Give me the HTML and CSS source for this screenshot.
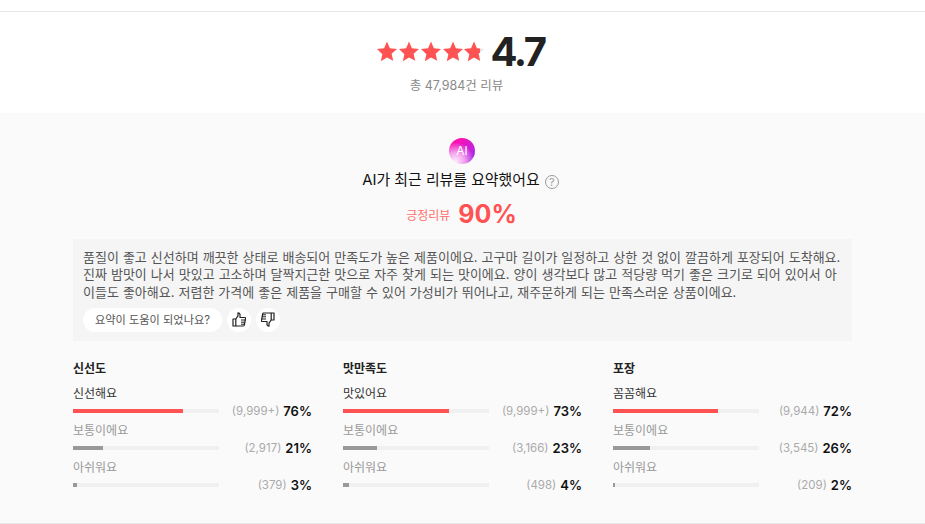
FILE: index.html
```html
<!DOCTYPE html>
<html lang="ko">
<head>
    <meta charset="UTF-8">
    <meta name="viewport" content="width=device-width, initial-scale=1.0">
    <title>리뷰 요약</title>
    <link rel="stylesheet" href="styles.css">
</head>
<body>
    <section class="rating">
        <div class="rating-top">
            <svg class="stars" width="107" height="22" viewBox="0 0 107 22" aria-hidden="true">
                <defs>
                    <path id="star" d="M10 .6l2.9 6.700 7.100.7-5.400 4.700 1.600 7.100L10 16.600l-6.200 3.700 1.600-7.100L0 8l7.100-.7z"/>
                    <clipPath id="part"><rect x="0" y="0" width="16" height="22"/></clipPath>
                </defs>
                <use href="#star" x="0" fill="#ff5252"/>
                <use href="#star" x="22" fill="#ff5252"/>
                <use href="#star" x="44" fill="#ff5252"/>
                <use href="#star" x="66" fill="#ff5252"/>
                <use href="#star" x="87" fill="#e4e4e4"/>
                <use href="#star" x="87" fill="#ff5252" clip-path="url(#part)"/>
            </svg>
            <strong class="score">4.7</strong>
        </div>
        <p class="total">총 47,984건 리뷰</p>
    </section>

    <section class="panel">
        <div class="ai-badge">AI</div>
        <h2 class="ai-title">AI가 최근 리뷰를 요약했어요 <span class="help">?</span></h2>
        <div class="positive">
            <span class="positive-label">긍정리뷰</span>
            <strong class="positive-value">90%</strong>
        </div>

        <div class="summary">
            <p>품질이 좋고 신선하며 깨끗한 상태로 배송되어 만족도가 높은 제품이에요. 고구마 길이가 일정하고 상한 것 없이 깔끔하게 포장되어 도착해요. 진짜 밤맛이 나서 맛있고 고소하며 달짝지근한 맛으로 자주 찾게 되는 맛이에요. 양이 생각보다 많고 적당량 먹기 좋은 크기로 되어 있어서 아이들도 좋아해요. 저렴한 가격에 좋은 제품을 구매할 수 있어 가성비가 뛰어나고, 재주문하게 되는 만족스러운 상품이에요.</p>
            <div class="feedback">
                <span class="feedback-label">요약이 도움이 되었나요?</span>
                <button class="thumb" aria-label="도움이 됐어요">
                    <svg width="14" height="15" viewBox="0 0 14 15" fill="none" stroke="#222" stroke-width="1.2" stroke-linejoin="round"><path d="M1 7h2.800v7H1z"/><path d="M3.800 7L6 3.800V.8c1.200 0 2 .8 2 2V5.500h4.800c.7 0 .9.5.7 1.100L12.400 13c-.1.600-.5 1-1.100 1H3.800"/><path d="M9 8h4.500M9 10.200h4M9 12.200h3.500" stroke-width="1"/></svg>
                </button>
                <button class="thumb" aria-label="도움이 안 됐어요">
                    <svg width="14" height="15" viewBox="0 0 14 15" fill="none" stroke="#222" stroke-width="1.2" stroke-linejoin="round"><path d="M13 8h-2.800V1H13z"/><path d="M10.200 8L8 11.200v3c-1.200 0-2-.8-2-2V9.500H1.200c-.7 0-.9-.5-.7-1.100L1.600 2c.1-.6.5-1 1.100-1h7.500"/><path d="M5 7H.5M5 4.800H1M5 2.800H1.500" stroke-width="1"/></svg>
                </button>
            </div>
        </div>

        <div class="stats">
            <div class="stat">
                <h3>신선도</h3>
                <div class="row active">
                    <div class="row-label">신선해요</div>
                    <div class="row-line"><div class="track"><div class="fill" style="width:75.5%"></div></div><span class="count">(9,999+)</span><b>76%</b></div>
                </div>
                <div class="row">
                    <div class="row-label">보통이에요</div>
                    <div class="row-line"><div class="track"><div class="fill" style="width:20.500%"></div></div><span class="count">(2,917)</span><b>21%</b></div>
                </div>
                <div class="row">
                    <div class="row-label">아쉬워요</div>
                    <div class="row-line"><div class="track"><div class="fill" style="width:3%"></div></div><span class="count">(379)</span><b>3%</b></div>
                </div>
            </div>
            <div class="stat">
                <h3>맛만족도</h3>
                <div class="row active">
                    <div class="row-label">맛있어요</div>
                    <div class="row-line"><div class="track"><div class="fill" style="width:72.500%"></div></div><span class="count">(9,999+)</span><b>73%</b></div>
                </div>
                <div class="row">
                    <div class="row-label">보통이에요</div>
                    <div class="row-line"><div class="track"><div class="fill" style="width:23%"></div></div><span class="count">(3,166)</span><b>23%</b></div>
                </div>
                <div class="row">
                    <div class="row-label">아쉬워요</div>
                    <div class="row-line"><div class="track"><div class="fill" style="width:4%"></div></div><span class="count">(498)</span><b>4%</b></div>
                </div>
            </div>
            <div class="stat">
                <h3>포장</h3>
                <div class="row active">
                    <div class="row-label">꼼꼼해요</div>
                    <div class="row-line"><div class="track"><div class="fill" style="width:72%"></div></div><span class="count">(9,944)</span><b>72%</b></div>
                </div>
                <div class="row">
                    <div class="row-label">보통이에요</div>
                    <div class="row-line"><div class="track"><div class="fill" style="width:25.500%"></div></div><span class="count">(3,545)</span><b>26%</b></div>
                </div>
                <div class="row">
                    <div class="row-label">아쉬워요</div>
                    <div class="row-line"><div class="track"><div class="fill" style="width:1.500%"></div></div><span class="count">(209)</span><b>2%</b></div>
                </div>
            </div>
        </div>
    </section>
</body>
</html>
```

FILE: styles.css
```css
body {
    font-family: Inter, "Noto Sans CJK KR", sans-serif;
    margin: 0;
    padding: 11px 0 0;
    background-color: #fff;
    color: #111;
    overflow: hidden;
}

.rating {
    border-top: 1px solid #e6e6e6;
    height: 102px;
    box-sizing: border-box;
    padding-top: 18px;
    text-align: center;
}

.rating-top {
    display: flex;
    justify-content: center;
    align-items: center;
    gap: 7px;
    height: 44px;
    margin-right: 4px;
}

.stars {
    margin-top: -1px;
}

.score {
    font-size: 40px;
    line-height: 44px;
    font-weight: 700;
    letter-spacing: -2.5px;
    color: #222;
}

.total {
    margin: 3px 12px 0 0;
    font-size: 12.500px;
    line-height: 18px;
    color: #8a8a8a;
}

.panel {
    background-color: #fafafa;
    border-bottom: 1px solid #e6e6e6;
    height: 411px;
    box-sizing: border-box;
    padding: 25px 73px 0;
    display: flex;
    flex-direction: column;
    align-items: center;
}

.ai-badge {
    width: 26px;
    height: 26px;
    margin-right: 1px;
    border-radius: 50%;
    background: radial-gradient(circle at 25% 90%, #fbeefc 0, #f3a0ee 30%, transparent 62%), linear-gradient(135deg, #ff10b0 20%, #a828f0 85%);
    color: #fff;
    font-size: 12px;
    line-height: 26px;
    text-align: center;
}

.ai-title {
    margin: 4px 4px 0 0;
    font-size: 14.900px;
    line-height: 24px;
    font-weight: 400;
    color: #111;
}

.help {
    display: inline-block;
    width: 12px;
    height: 12px;
    margin-left: 1px;
    border: 1px solid #999;
    border-radius: 50%;
    color: #999;
    font-size: 11px;
    line-height: 12px;
    text-align: center;
    vertical-align: -1px;
}

.positive {
    display: flex;
    align-items: center;
    gap: 8px;
    margin-top: 5px;
    margin-right: 2px;
    height: 34px;
}

.positive-label {
    font-size: 12px;
    color: #ff7070;
}

.positive-value {
    font-size: 25px;
    font-weight: 700;
    color: #ff5252;
}

.summary {
    align-self: stretch;
    margin-top: 8px;
    background-color: #f5f5f5;
    height: 102px;
    box-sizing: border-box;
    padding: 9.500px 10px 0;
}

.summary p {
    margin: 0;
    font-size: 13px;
    line-height: 17.500px;
    word-spacing: 0.35px;
    color: #555;
}

.feedback {
    display: flex;
    align-items: center;
    gap: 5px;
    margin-top: 6.500px;
}

.feedback-label {
    background-color: #fff;
    border-radius: 12px;
    width: 139px;
    height: 24px;
    font-size: 11.200px;
    line-height: 24px;
    text-align: center;
    color: #555;
}

.thumb {
    width: 24px;
    height: 24px;
    padding: 0;
    border: 0;
    border-radius: 50%;
    background-color: #fff;
    display: flex;
    align-items: center;
    justify-content: center;
}

.stats {
    align-self: stretch;
    display: grid;
    grid-template-columns: repeat(3, 239px);
    column-gap: 31px;
    margin-top: 19px;
}

.stat h3 {
    margin: 0 0 8px;
    font-size: 12px;
    line-height: 18px;
    font-weight: 700;
    color: #222;
}

.row {
    height: 37px;
}

.row-label {
    font-size: 12px;
    line-height: 16px;
    color: #999;
}

.row.active .row-label {
    color: #333;
}

.row-line {
    display: flex;
    align-items: center;
    height: 16px;
    margin-top: 1px;
    font-size: 13px;
}

.track {
    width: 146px;
    height: 4px;
    background-color: #f0f0f0;
    margin-right: auto;
}

.fill {
    height: 100%;
    background-color: #999;
}

.row.active .fill {
    background-color: #ff5252;
}

.count {
    font-size: 11.500px;
    color: #aaa;
    margin-right: 4px;
}

.row-line b {
    font-weight: 600;
    color: #111;
}
```
